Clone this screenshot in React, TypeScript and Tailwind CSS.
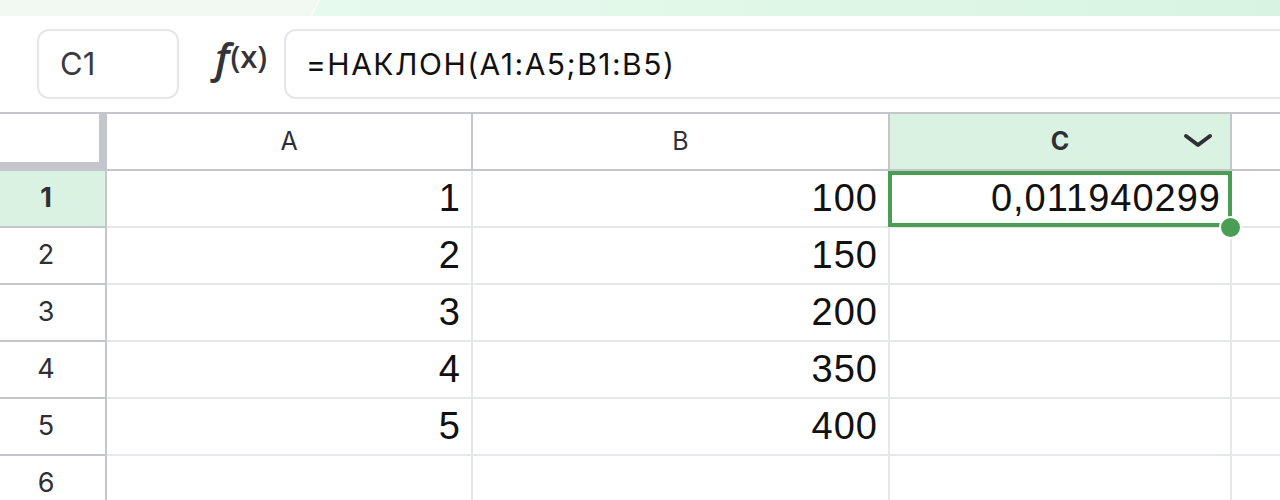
import React from "react";

const rows = [
  { n: 1, a: "1", b: "100", c: "0,011940299" },
  { n: 2, a: "2", b: "150", c: "" },
  { n: 3, a: "3", b: "200", c: "" },
  { n: 4, a: "4", b: "350", c: "" },
  { n: 5, a: "5", b: "400", c: "" },
  { n: 6, a: "", b: "", c: "" },
];

export default function App() {
  return (
    <div className="h-[500px] w-[1280px] overflow-hidden bg-white font-['Inter','Noto_Sans',sans-serif]">
      {/* top decorative strip */}
      <div className="flex h-4 overflow-hidden bg-white">
        <div className="w-[319px] shrink-0 bg-[#f2f9f3] [clip-path:polygon(0_0,319px_0,311px_100%,0_100%)]" />
        <div className="-ml-[7px] flex-1 bg-[linear-gradient(90deg,#e7faee,#d8f4e0)] [clip-path:polygon(8px_0,100%_0,100%_100%,0_100%)]" />
      </div>

      {/* formula bar */}
      <div className="flex h-[96px] items-center overflow-hidden pl-[37px]">
        <div className="flex h-[70px] w-[142px] shrink-0 items-center rounded-[12px] border-2 border-[#e5e6ea] pl-[21px] text-[31px] text-[#3a3a40]">
          C1
        </div>
        <div className="flex h-[70px] w-[105px] shrink-0 items-center pl-[36px] text-[#333338]">
          <span className="-translate-y-[7px] font-['Open_Sans',sans-serif] text-[42px] font-semibold italic leading-none">f</span>
          <span className="ml-[1px] -translate-y-[8px] font-['Open_Sans',sans-serif] text-[31px] font-semibold leading-none">(x)</span>
        </div>
        <div className="-mr-[30px] flex h-[70px] flex-1 items-center rounded-[12px] border-2 border-[#e5e6ea] pl-[20px] text-[30px] tracking-[1.5px] text-[#111]">
          =НАКЛОН(A1:A5;B1:B5)
        </div>
      </div>

      {/* grid */}
      <div className="border-t-2 border-[#c4c6cc]">
        {/* header row */}
        <div className="flex h-[57px]">
          <div className="w-[107px] shrink-0 border-b-[9px] border-r-[8px] border-[#c4c6cc] bg-white" />
          <div className="flex w-[366px] shrink-0 items-center justify-center border-b-2 border-r-2 border-[#c4c6cc] text-[25px] text-[#2f3035]">
            A
          </div>
          <div className="flex w-[417px] shrink-0 items-center justify-center border-b-2 border-r-2 border-[#c4c6cc] text-[25px] text-[#2f3035]">
            B
          </div>
          <div className="relative flex w-[342px] shrink-0 items-center justify-center border-b-2 border-r-2 border-[#c4c6cc] bg-[#d9f2e2] text-[25px] font-bold text-[#2f3035]">
            C
            <svg
              className="absolute right-[16px] top-[18px]"
              width="32"
              height="18"
              viewBox="0 0 32 18"
              fill="none"
            >
              <path
                d="M4 4 L16 13 L28 4"
                stroke="#2f3035"
                strokeWidth="4"
                strokeLinecap="round"
                strokeLinejoin="round"
              />
            </svg>
          </div>
          <div className="flex-1 border-b-2 border-[#c4c6cc]" />
        </div>

        {rows.map((r) => (
          <div key={r.n} className="flex h-[57px]">
            <div
              className={
                r.n === 1
                  ? "flex w-[107px] shrink-0 items-center justify-center border-b-2 border-r-2 border-[#c4c6cc] bg-[#d9f2e2] pr-[13px] text-[27px] font-bold text-[#2f3035]"
                  : "flex w-[107px] shrink-0 items-center justify-center border-b-2 border-r-2 border-[#c4c6cc] bg-white pr-[13px] text-[27px] text-[#2f3035]"
              }
            >
              {r.n}
            </div>
            <div className="flex w-[366px] shrink-0 items-center justify-end border-b-2 border-r-2 border-[#e6e7ea] pr-[10px] font-['Liberation_Sans',Arial,sans-serif] text-[38px] tracking-[1px] text-[#111]">
              {r.a}
            </div>
            <div className="flex w-[417px] shrink-0 items-center justify-end border-b-2 border-r-2 border-[#e6e7ea] pr-[10px] font-['Liberation_Sans',Arial,sans-serif] text-[38px] tracking-[1px] text-[#111]">
              {r.b}
            </div>
            <div className="relative flex w-[342px] shrink-0 items-center justify-end border-b-2 border-r-2 border-[#e6e7ea] pr-[9px] font-['Liberation_Sans',Arial,sans-serif] text-[38px] tracking-[1px] text-[#111]">
              {r.c}
              {r.n === 1 && (
                <>
                  <div className="pointer-events-none absolute -bottom-[1px] -left-[2px] -right-[2px] top-0 border-4 border-[#4a9e54]" />
                  <div className="absolute -right-[12px] top-[45px] z-10 h-[23px] w-[23px] rounded-full border-2 border-white bg-[#4a9e54]" />
                </>
              )}
            </div>
            <div className="flex-1 border-b-2 border-[#e6e7ea]" />
          </div>
        ))}
      </div>
    </div>
  );
}
